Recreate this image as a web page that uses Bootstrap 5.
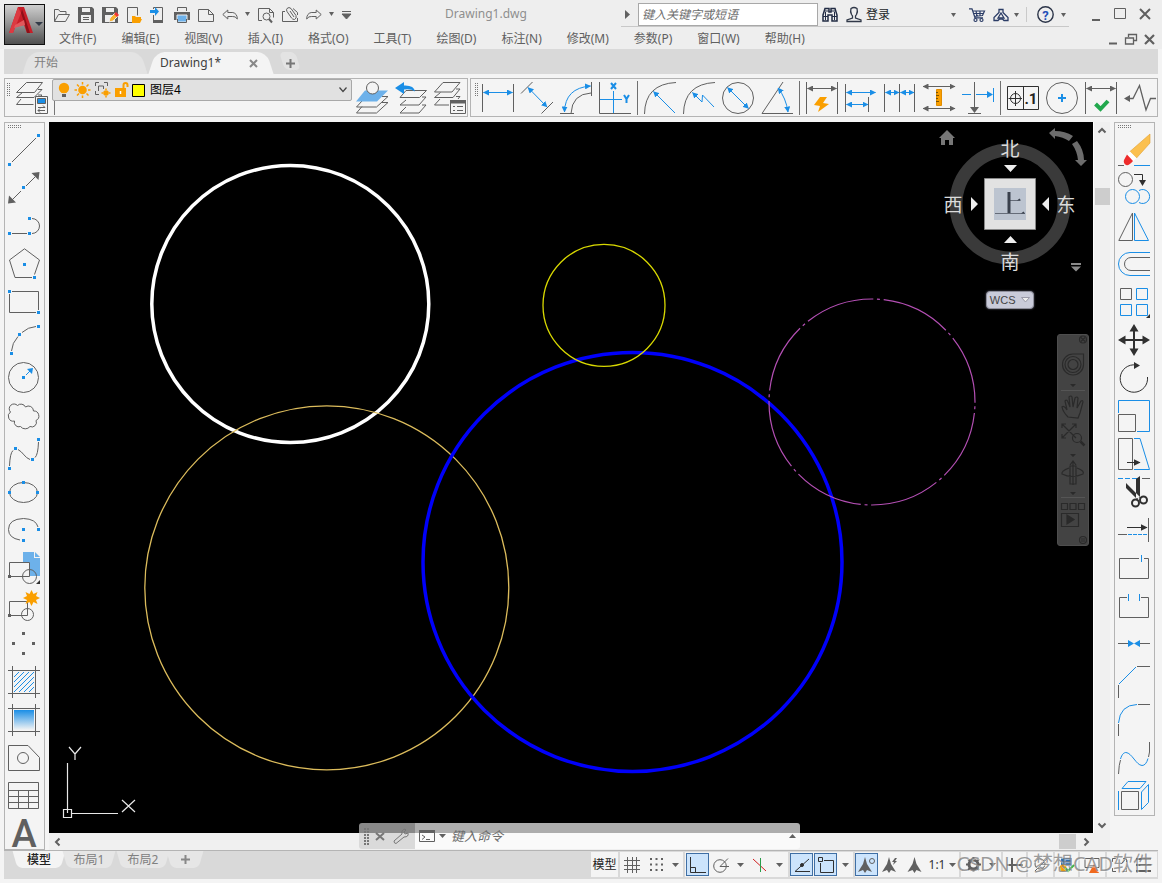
<!DOCTYPE html>
<html lang="zh-CN">
<head>
<meta charset="utf-8">
<meta name="viewport" content="width=device-width, initial-scale=1">
<title>Drawing1.dwg</title>
<link href="https://cdn.jsdelivr.net/npm/bootstrap@5.3.0/dist/css/bootstrap.min.css" rel="stylesheet">
<style>
:root{--ink:#606060;--blue:#1a8ee6;--edge:#b4b4b4;--panel:#f4f4f4;--bar:#d9d9d9}
body{font-family:"Noto Sans","Noto Sans CJK SC",sans-serif;font-size:12px;line-height:16px;color:#606060;background:var(--panel)}
button{font:inherit;color:inherit;background:none;border:0;padding:0;line-height:1}
svg{display:block;flex:none;fill:none;overflow:visible}
svg:where(:not([stroke])){stroke:var(--ink)}
.b{stroke:var(--blue)}.k{stroke:#303030}.r{stroke:#d02020}
.fb{fill:var(--blue);stroke:none}.fg{fill:var(--ink);stroke:none}.fk{fill:#303030;stroke:none}
.fo{fill:#fa9f00;stroke:none}.fw{fill:#f4f4f4}
.app-head{background:#eee}
.logo-btn{width:41px;height:41px;margin:4px 0 4px 4px;border:1px solid #111;background:linear-gradient(#cfcfcf,#8c8c8c 55%,#4e4e4e)}
.title-row{height:27px;padding:0 11px 0 9px}
.qat{gap:8px;padding-top:2px}
.tight{margin-left:-4px}
.title-text{font-size:12px;color:#8e8e8e}
.help-row{height:27px;padding:3px 2px 0 0;border-bottom:1px solid #c8c8c8}
.help-row .vr{margin-right:10px}
.search-box{width:180px;height:23px;border:1px solid #a8a8a8;background:#fff;font-size:12px;font-style:italic;padding:0 3px;border-radius:0}
.search-box::placeholder,.cmd-box::placeholder{color:#6c6c6c;opacity:1}
.win-btns{gap:13px;margin-left:23px}
.menu-row{height:22px;padding:2px 7px 0 14px}
.menu-row nav{gap:25px}
.doc-btns{gap:7px}
.menu-row a,.menu-row a:hover{color:#606060;text-decoration:none}
.doc-tabs{height:25px;background:var(--bar);margin:0 4px;padding:3px 0 0 18px}
.doc-tab{position:relative;height:22px;width:126px;padding-left:12px;z-index:0}
.doc-tab::before,.doc-tab::after{content:"";position:absolute;top:0;bottom:0;width:60%;z-index:-1;background:#e3e3e3}
.doc-tab::before{left:4px;transform:skewX(-18deg);border-radius:9px 0 0 0}
.doc-tab::after{right:4px;transform:skewX(18deg);border-radius:0 9px 0 0}
.doc-tab.current::before,.doc-tab.current::after,.sheet.current::before,.sheet.current::after{background:var(--panel)}
.doc-tab.plus-tab{width:24px;padding:0}
.doc-tab.plus-tab::before,.doc-tab.plus-tab::after{transform:skewX(18deg);border-radius:5px;bottom:4px}
.doc-tab a,.sheet,.sheet:hover{color:#808080;text-decoration:none}
.doc-tab.current a{color:#404040}
.bars{padding:4px 4px 0;gap:2px}
.bar-frame{height:39px;border:1px solid var(--edge);background:var(--panel)}
.grip-h{height:8px;padding:2px 0 0 3px}
.layer-bar{width:464px;padding:0 2px}
.layer-pick{width:300px;height:22px;border:1px solid #a8a8a8;border-radius:2px;background:#e1e1e1;padding:0 4px;gap:3px}
.layer-pick select{appearance:none;border:0;background:none;color:#000;font-size:12px;padding:0;margin-left:2px;line-height:16px;height:18px}
.layer-wrap{width:300px;height:36px;margin-left:4px}
.layer-wrap~button+button{margin-left:7px}
.layer-stub{width:1px;height:14px;background:#777;margin-left:2px}
.dim-bar{padding:0 0 0 4px}
.dim-set{gap:6px;margin-left:2px}
.dim-set button{width:33px;height:32px}
.dim-sep{width:1px;height:34px;background:#707070;margin-left:-1px}
.work{padding:5px 7px 0 4px;gap:4px}
.tool-col{width:41px;border:1px solid var(--edge);background:var(--panel)}
.tool-col button{height:38px;width:39px;flex:none;display:flex;align-items:center;justify-content:center}
.tool-col button svg{margin-left:-1px}
.tool-col .text-tool{height:34px}
.sheet-area{background:#000}
.vbar{width:17px;background:#f0f0f0;border-left:1px solid #fff;padding:6px 0 5px}
.hbar{height:17px;background:#f0f0f0;padding:0 21px 0 6px}
.vthumb{width:15px;height:17px;background:#cdcdcd;margin-top:55px}
.hthumb{width:17px;height:15px;background:#cdcdcd}
.compass{position:absolute;top:0;right:0}
.compass text{font-family:"Noto Sans CJK SC",sans-serif;font-size:19px;fill:#dcdcdc;stroke:none;text-anchor:middle}
.wcs{position:absolute;top:169px;right:59px;width:48px;height:18px;border:1px solid #8f909c;border-radius:4px;background:#c9cbd9;color:#444;font-size:11px;font-family:"Liberation Sans",sans-serif;box-shadow:0 0 2px #667}
.nav-pad{position:absolute;top:212px;right:4px;width:32px;height:212px;border:1px solid #4e4e4e;border-radius:3px;background:#434343}
.nav-pad svg{stroke:#2a2a2a}
.ucs{position:absolute;left:12px;bottom:11px;stroke:#e8e8e8}
.cmd{position:absolute;bottom:1px;left:310px;width:441px;height:26px;border-radius:3px;overflow:hidden}
.cmd-side{width:56px;background:rgba(207,207,207,.66);padding-left:6px}
.cmd-inner{background:rgba(255,255,255,.68);padding:0 4px}
.cmd-box{border:0;background:none;font-size:13px;font-style:italic;padding:0;margin-left:5px;outline:0;line-height:18px}
.status{height:29px;background:var(--bar);border-top:1px solid var(--edge);margin:0 4px 4px}
.sheets{padding-left:10px}
.sheet{position:relative;z-index:0;width:50px;height:17px;font-size:12px;line-height:17px;text-align:center}
.sheet::before,.sheet::after{content:"";position:absolute;top:0;bottom:0;width:60%;z-index:-1;background:#e6e6e6}
.sheet::before{left:1px;transform:skewX(16deg);border-radius:0 0 0 5px}
.sheet::after{right:1px;transform:skewX(-16deg);border-radius:0 0 5px 0}
.sheet.current{color:#222;font-weight:500}
.sheet.plus{width:34px}
.stat{padding:1px 1px 0 0;gap:2px}
.stat-set{height:25px;background:var(--panel)}
.stat-set button{width:24px;height:23px;display:flex;align-items:center;justify-content:center}
.stat-set button.drop{width:15px}
.stat-set button.on{border:1px solid #3f6fa5;background:#cce4fc;width:23px}
.stat-set .word{width:27px;color:#222}
.stat-set .scale-pick{width:33px;gap:4px;color:#333}
.snap-set{gap:1px}
.polar-set{padding:0 1px}
.s22{width:23px}.s25{width:25px}.s40{width:40px}.s50{width:50px}
.stamp{position:absolute;right:5px;bottom:3px;font-size:20px;line-height:24px;color:rgba(125,125,125,.75);text-shadow:1px 1px 0 rgba(255,255,255,.5);white-space:nowrap}
</style>
</head>
<body class="vh-100 overflow-hidden d-flex flex-column">
<svg width="0" height="0" class="position-absolute" aria-hidden="true"><defs>
<marker id="ab" viewBox="0 0 6 6" refX="5.500" refY="3" markerWidth="6" markerHeight="6" markerUnits="userSpaceOnUse" orient="auto-start-reverse"><path d="M0 0L6 3L0 6z" fill="#1a8ee6" stroke="none"/></marker>
<marker id="ag" viewBox="0 0 6 6" refX="5.500" refY="3" markerWidth="6" markerHeight="6" markerUnits="userSpaceOnUse" orient="auto-start-reverse"><path d="M0 0L6 3L0 6z" fill="#606060" stroke="none"/></marker>
<marker id="ak" viewBox="0 0 6 6" refX="5.500" refY="3" markerWidth="7" markerHeight="7" markerUnits="userSpaceOnUse" orient="auto-start-reverse"><path d="M0 0L6 3L0 6z" fill="#303030" stroke="none"/></marker>
<linearGradient id="fade" x2="0" y2="1"><stop stop-color="#1a8ee6"/><stop offset="1" stop-color="#f4f4f4"/></linearGradient>
</defs></svg>

<header class="app-head d-flex">
  <button class="logo-btn d-flex align-items-center" aria-label="应用程序菜单">
    <svg width="39" height="39" stroke="none"><path d="M4 28L13 2h6l9 26h-6l-3-8-9 2-2 6z" fill="#c81e28"/><path d="M13 2l-9 26h4L16 8z" fill="#dc3a42"/><path d="M16 8l4 12 2 8h3L17 4z" fill="#8e1018"/><path d="M10 20l9-5 1 5-11 3z" fill="#e2585c"/><path d="M30 17h8l-4 4z" fill="#333b48"/></svg>
  </button>
  <div class="flex-grow-1 d-flex flex-column">
    <div class="title-row d-flex align-items-center">
      <div class="qat d-flex align-items-center">
        <button aria-label="打开"><svg width="16" height="16"><path d="M.5 14.500v-12h4l1.500 2h6v3M.5 14.500l4-7h11l-4 7z"/></svg></button>
        <button aria-label="保存"><svg width="16" height="16"><path d="M0 0h14l2 2v14H0z" class="fg"/><path d="M4 1h8v4H4zM3 8h10v7H3z" fill="#eee" stroke="none"/><path d="M5 10.500h6M5 12.500h6"/></svg></button>
        <button aria-label="另存为"><svg width="16" height="16"><path d="M0 0h14l2 2v14H0z" class="fg"/><path d="M4 1h8v4H4zM3 8h10v7H3z" fill="#eee" stroke="none"/><path d="M7 15l1-4 5-5 3 3-5 5z" fill="#f9b233" stroke="#eee"/><path d="M12 7l2-2 3 3-2 2z" fill="#e33" stroke="none"/></svg></button>
        <button aria-label="从云打开"><svg width="16" height="16"><path d="M7 15.500H1.500V.5h10v8"/><path d="M6 9h3l1 1h5v2h1l-2 4H6z" class="fo"/></svg></button>
        <button aria-label="保存到云"><svg width="16" height="16"><path d="M3.500 2V.5h9v15h-9V8"/><path d="M0 3h5V0l4 4.500L5 9V6H0z" class="fb"/><path d="M3 13h10v3H3z" class="fg"/></svg></button>
        <button aria-label="打印"><svg width="16" height="16"><path d="M3.500 4V.5h9V4"/><path d="M0 5h16v8H0z" class="fg"/><path d="M3 8h10v7H3z" fill="#6db1ea" stroke="#eee"/><path d="M3.500 12v3.500h9V12"/></svg></button>
        <button aria-label="新建"><svg width="16" height="16"><path d="M.5 2.500h10l5 5v7H.5zM10.500 2.500v5h5"/></svg></button>
        <button aria-label="放弃"><svg width="16" height="16"><path d="M.8 7.500l5-4.500v2.500h5q4.500 1 4.500 6.500-2-3-5-2.500H5.800V12z"/></svg></button>
        <button class="tight" aria-label="放弃列表"><svg width="8" height="5"><path d="M3 0h5L5.500 4z" class="fg"/></svg></button>
        <button aria-label="打印预览"><svg width="16" height="16"><path d="M4 13.500H.5v-12h11l4 4v5M11.500 1.500v4h4"/><circle cx="8.500" cy="9.500" r="3.500"/><path d="M11 12l3 3.500" stroke-width="2"/></svg></button>
        <button aria-label="附着"><svg width="16" height="16"><path d="M3 4.500H.5v10h15V11M11 1.500l4.500 4V8"/><path d="M5 1.500q2-2 4 0l5 7q1 3-1.500 4-2 0-3-1.500L5 4.500q-1-2 0-3zM8 4l4 6"/></svg></button>
        <button aria-label="重做"><svg width="16" height="16"><path d="M15.200 7.500l-5-4.500v2.500h-5Q.700 6.500.7 12q2-3 5-2.500h4.500V12z"/></svg></button>
        <button class="tight" aria-label="重做列表"><svg width="8" height="5"><path d="M3 0h5L5.500 4z" class="fg"/></svg></button>
        <button aria-label="自定义快速访问工具栏"><svg width="9" height="8"><path d="M0 .5h9M0 3h9L4.500 8z" fill="#606060"/></svg></button>
      </div>
      <div class="title-text flex-grow-1 text-center">Drawing1.dwg</div>
      <div class="help-row d-flex align-items-center">
        <svg class="ms-1 me-2" width="5" height="9"><path d="M0 0l5 4.500L0 9z" class="fg"/></svg>
        <input class="search-box" placeholder="键入关键字或短语" aria-label="搜索">
        <button class="ms-1" aria-label="查找"><svg width="16" height="15" stroke="#222c44"><path d="M1 8l2-6.500h4V5h2V1.500h4L15 8v6H10V8H6v6H1z" fill="#eee" stroke-width="1.500"/><path d="M1 9.500h5m4 0h5M3 4h4m2 0h4M3.500 5v8M12.500 5v8"/></svg></button>
        <button class="ms-2 d-flex align-items-center"><svg class="me-1" width="16" height="15" stroke="#303848"><path d="M5 1.500q3-2 6 0 1 3-.5 6L9.500 9v2l5.500 2v1.500H1V13l5.500-2V9L5.500 7.500Q4 4.500 5 1.500z" stroke-width="1.300"/></svg><span class="text-dark">登录</span></button>
        <button class="ps-5 ms-2 pe-1" aria-label="登录选项"><svg width="11" height="4"><path d="M5 0h5L7.500 4z" class="fg"/></svg></button>
        <button class="ms-2" aria-label="应用商店"><svg width="16" height="14" stroke="#2b3c66" stroke-width="1.200"><path d="M0 .8h3l3 9h8M4 3h11.500l-2 4.500-8.500 1M7 3l1 5m3-5v4.500M4 5.500h11"/><circle cx="6.500" cy="12" r="1.500"/><circle cx="12.500" cy="12" r="1.500"/></svg></button>
        <button class="ms-2" aria-label="联系"><svg width="16" height="14" stroke="#2b3c66" stroke-width="1.300"><path d="M6 1.500h4v3l5 5v3h-4l-1.500-1.500h-3L5 12.500H1v-3l5-5z"/><path d="M8 5l3 5H5z"/></svg></button>
        <button class="ms-1" aria-label="更多"><svg width="9" height="4"><path d="M1 0h5L3.500 4z" class="fg"/></svg></button>
        <div class="vr ms-1 my-1"></div>
        <button aria-label="帮助"><svg width="17" height="17" stroke="#2b3448"><circle cx="8.500" cy="8.500" r="7.700" stroke-width="1.400"/><text x="8.500" y="13.500" text-anchor="middle" font-family="Roboto" font-weight="700" font-size="13" fill="#2350b8" stroke="none">?</text></svg></button>
        <button class="ms-1" aria-label="帮助选项"><svg width="9" height="4"><path d="M3 0h5L5.500 4z" class="fg"/></svg></button>
      </div>
      <div class="win-btns d-flex align-items-center">
        <button aria-label="最小化"><svg width="9" height="12"><path d="M0 12h8" stroke-width="2"/></svg></button>
        <button aria-label="最大化"><svg width="12" height="11"><path d="M.5.5h11v10H.5z"/></svg></button>
        <button aria-label="关闭"><svg width="12" height="12"><path d="M1 1l10 10M11 1L1 11" stroke-width="2"/></svg></button>
      </div>
    </div>
    <div class="menu-row d-flex align-items-center">
      <nav class="d-flex flex-grow-1" aria-label="主菜单">
        <a href="#">文件(F)</a><a href="#">编辑(E)</a><a href="#">视图(V)</a><a href="#">插入(I)</a><a href="#">格式(O)</a><a href="#">工具(T)</a><a href="#">绘图(D)</a><a href="#">标注(N)</a><a href="#">修改(M)</a><a href="#">参数(P)</a><a href="#">窗口(W)</a><a href="#">帮助(H)</a>
      </nav>
      <div class="doc-btns d-flex">
        <button aria-label="最小化图形"><svg width="9" height="12"><path d="M0 10.500h8" stroke-width="2"/></svg></button>
        <button aria-label="还原图形"><svg width="12" height="11"><path d="M3.500 3V.5h8v6H9M.5 4h8v6h-8z" stroke-width="1.300"/></svg></button>
        <button aria-label="关闭图形"><svg width="11" height="11"><path d="M1 1l9 9M10 1L1 10" stroke-width="2.200"/></svg></button>
      </div>
    </div>
  </div>
</header>

<div class="doc-tabs d-flex">
  <div class="doc-tab d-flex align-items-center"><a href="#">开始</a></div>
  <div class="doc-tab current d-flex align-items-center"><a class="flex-grow-1" href="#">Drawing1*</a><button class="me-3" aria-label="关闭选项卡"><svg width="9" height="9"><path d="M1 1l7 7M8 1L1 8" stroke="#888" stroke-width="2"/></svg></button></div>
  <div class="doc-tab plus-tab d-flex align-items-center justify-content-center ms-1"><button aria-label="新图形"><svg width="9" height="9"><path d="M4.500 0v9M0 4.500h9" stroke="#777" stroke-width="2"/></svg></button></div>
</div>

<div class="bars d-flex">
  <div class="bar-frame layer-bar d-flex" role="toolbar" aria-label="图层">
    <svg width="5" height="18"><path d="M.5 4v13M2.500 4v13" stroke="#777" stroke-dasharray="1 1"/></svg>
    <button class="ms-1" aria-label="图层特性"><svg width="32" height="32"><path d="M10.500.5h16l-8 10h-18zM22 7.500h4l-8 8H.5l6-5M22 13h4l-2 2M5 17l-4.500 5.500h17"/><path d="M19.500 14.500h12v17h-12z" class="fw"/><path d="M21.500 16.500h8v5h-8z" fill="#1a8ee6"/><path d="M22 25.500h7M29 28.500h-7M27 23.500l2 2M24 26.500l-2 2 2 2"/></svg></button>
    <div class="layer-wrap">
      <div class="layer-pick d-flex align-items-center">
        <svg width="15" height="16"><circle cx="7" cy="6" r="5.200" class="fo"/><path d="M4.500 9h5v2h-5z" class="fo"/><path d="M5 12h4v3H5z" class="fg"/></svg>
        <svg width="16" height="16"><circle cx="7.500" cy="8" r="4.300" class="fo"/><path d="M7.500 0v2.500m0 11V16M-.5 8h2.500m11 0h2.500M2 2.500l2 2m7.500 7l2 2M2 13.500l2-2m7.500-7l2-2" stroke="#fa9f00" stroke-width="1.500"/></svg>
        <svg width="18" height="16"><path d="M1.500 4V.5H5M10 .5h3.500V4M1.500 9v3.500H5M4.500 9v-5h5v3"/><circle cx="12" cy="11" r="2.800" class="fo"/><path d="M12 6.500v1.500m0 6v1.500M7.500 11H9m6 0h1.500" stroke="#fa9f00" stroke-width="1.500"/></svg>
        <svg width="14" height="16"><path d="M0 6h11v9H0z" class="fo"/><path d="M8.500 6V3q0-2 2-2t2 2v2" stroke="#fa9f00" stroke-width="2"/><path d="M5.500 9v3" stroke="#fff" stroke-width="1.500"/></svg>
        <svg width="13" height="13"><path d="M.5.5h12v12H.5z" fill="#ff0" stroke="#000"/></svg>
        <select class="flex-grow-1" aria-label="当前图层"><option>图层4</option></select>
        <svg width="8" height="6"><path d="M.5.5L4 4.500 7.500.5" stroke="#444" stroke-width="1.200"/></svg>
      </div>
      <div class="layer-stub"></div>
    </div>
    <button class="ms-1" aria-label="置为当前"><svg width="32" height="32"><path d="M6 24.500L.5 31h20L32 20.500h-6M6 19L.5 25h20L32 14.500h-6"/><path d="M9 8.500h23l-11 11H0z" fill="#6db1ea" stroke="none"/><circle cx="16.500" cy="6" r="6" fill="#f4f4f4"/></svg></button>
    <button aria-label="上一个图层"><svg width="32" height="32"><path d="M11 8.500h20.500l-7 7H5zM27 15h4l-7 8H5l6-5M27 23h4l-7 8H5l6-6"/><path d="M0 6l9-6v3.500q10-.5 11 6-4-3-11-2V12z" class="fb"/></svg></button>
    <button aria-label="图层状态"><svg width="32" height="32"><path d="M9 .5h17l-8 9.500H.5zM22 7h4l-7 8.500H.5l6-5M22 14.500h4L24 17M6 17l-5.500 6H15"/><path d="M16.500 18.500h15v13h-15z" class="fw"/><path d="M16 18h16v3.500H16z" class="fg"/><path d="M19 24.500h2m2 0h6M19 28.500h2m2 0h6"/></svg></button>
  </div>
  <div class="bar-frame dim-bar flex-grow-1 d-flex" role="toolbar" aria-label="标注">
    <svg width="5" height="18"><path d="M.5 4v13M2.500 4v13" stroke="#777" stroke-dasharray="1 1"/></svg>
    <div class="dim-set d-flex align-items-center">
      <button aria-label="线性"><svg width="32" height="32"><path d="M.5 2v28M31.500 2v28"/><path class="b" d="M1.500 10.500h29" marker-start="url(#ab)" marker-end="url(#ab)"/></svg></button>
      <button aria-label="对齐"><svg width="32" height="32"><path d="M0 11.500L11.500 0M20.500 31.500L32 20"/><path class="b" d="M7 5.500L26 25" marker-start="url(#ab)" marker-end="url(#ab)"/></svg></button>
      <button aria-label="弧长"><svg width="32" height="32"><path d="M0 31.500h14M11 31.500Q12 12 31 11M31.500 0v14"/><path class="b" d="M4.500 30Q5 6 30.500 4" marker-start="url(#ab)" marker-end="url(#ab)"/></svg></button>
      <button aria-label="坐标"><svg width="32" height="32"><path d="M.5 0v31.500H32"/><path class="b" d="M14.500 9v22M1 17.500h22"/><path class="b" d="M12 1l5 6M17 1l-5 6M25 13l2.500 4 2.500-4M27.500 17v4" stroke-width="2"/></svg></button>
      <div class="dim-sep"></div>
      <button aria-label="半径"><svg width="32" height="32"><path d="M.5 32Q1 2 32 .5"/><path class="b" d="M9.500 9.500L31 31" marker-start="url(#ab)"/></svg></button>
      <button aria-label="折弯"><svg width="32" height="32"><path d="M.5 32Q1 2 32 .5"/><path class="b" d="M9.500 10.500L19 20l.5-7L31 25" marker-start="url(#ab)"/></svg></button>
      <button aria-label="直径"><svg width="32" height="32"><circle cx="16" cy="16" r="15.500"/><path class="b" d="M5.500 5.500L26.500 26.500" marker-start="url(#ab)" marker-end="url(#ab)"/></svg></button>
      <button aria-label="角度"><svg width="32" height="32"><path d="M22 0L1 31.500h31"/><path class="b" d="M17 6Q25 16 27 30" marker-start="url(#ab)" marker-end="url(#ab)"/></svg></button>
      <div class="dim-sep"></div>
      <button aria-label="快速标注"><svg width="32" height="32"><path d="M.5 0v32M31.500 0v32"/><path d="M1.500 6.500h29" marker-start="url(#ag)" marker-end="url(#ag)"/><path class="fo" d="M14 15l-6 8 6 1-2 6 11-8-6-1 4-6z"/></svg></button>
      <button aria-label="基线"><svg width="32" height="32"><path d="M.5 2v28M23.500 15v15"/><path class="b" d="M1.500 10.500h29" marker-start="url(#ab)" marker-end="url(#ab)"/><path class="b" d="M1.500 22.500H23" marker-start="url(#ab)" marker-end="url(#ab)"/></svg></button>
      <button aria-label="连续"><svg width="32" height="32"><path d="M.5 2v28M15.500 2v28M30.500 2v28"/><path class="b" d="M1.500 10.500H15" marker-start="url(#ab)" marker-end="url(#ab)"/><path class="b" d="M16.500 10.500H30" marker-start="url(#ab)" marker-end="url(#ab)"/></svg></button>
      <button aria-label="等距标注"><svg width="32" height="32"><path d="M0 4.500h32" marker-start="url(#ag)" marker-end="url(#ag)"/><path d="M0 26.500h32" marker-start="url(#ag)" marker-end="url(#ag)"/><path d="M13.500 7.500h5v16h-5z" fill="#fa9f00" stroke="#e08c00"/><path d="M13 10.500h2m-2 3h3m-3 3h2m-2 3h3" stroke="#7a5200"/></svg></button>
      <button aria-label="折断标注"><svg width="32" height="32"><path d="M12.500 0v26M6 31.500h13"/><path class="fg" d="M8 25h9l-4.500 6z"/><path class="b" d="M0 12.500h9M14 12.500h16M31.500 6v14"/><path class="fb" d="M25 9v7l6-3.500z"/></svg></button>
      <div class="dim-sep"></div>
      <button aria-label="公差"><svg width="32" height="32" class="k"><path d="M.5 4.500h31v23H.5zM16.500 4.500v23M8.500 9v15M1.500 16.500H15"/><circle cx="8.500" cy="16.500" r="5"/><text x="24" y="22" text-anchor="middle" font-family="Roboto" font-weight="700" font-size="15" fill="#222" stroke="none">.1</text></svg></button>
      <button aria-label="圆心标记"><svg width="32" height="32"><circle cx="16" cy="16" r="15.500"/><path class="b" d="M16 12v8M12 16h8" stroke-width="2"/></svg></button>
      <button aria-label="检验"><svg width="32" height="32"><path d="M.5 0v32M31.500 0v32"/><path d="M1.500 6.500h29" marker-start="url(#ag)" marker-end="url(#ag)"/><path d="M10.500 22l5 5 7.500-8" stroke="#21a84d" stroke-width="4"/></svg></button>
      <button aria-label="折弯线性"><svg width="32" height="32"><path d="M2 16.500h7L15.500 3.500 22 28l4.500-11.500H32" stroke-width="1.300"/><path class="fg" d="M0 16.500l6-3.500v7z"/></svg></button>
    </div>
  </div>
</div>

<main class="work flex-grow-1 d-flex">
  <div class="tool-col d-flex flex-column flex-shrink-0" role="toolbar" aria-label="绘图">
    <div class="grip-h flex-shrink-0"><svg width="14" height="4"><path d="M0 .5h14M0 2.500h14" stroke="#777" stroke-dasharray="1 1"/></svg></div>
    <button aria-label="直线"><svg width="32" height="32"><path d="M4 28L28 4"/><path class="fb" d="M0 29h3v3H0zM29 0h3v3h-3z"/></svg></button>
    <button aria-label="构造线"><svg width="32" height="32"><path d="M4 28l9-9M18 14l9-9"/><path class="fg" d="M31.500 0l-1 8-7-7zM0 31.500l1-8 7 7z"/><path class="fb" d="M14 14h3v3h-3z"/></svg></button>
    <button aria-label="多段线"><svg width="32" height="32"><path d="M4 23.500h15M24 8.500a7.500 7.500 0 0 1 0 15"/><path class="fb" d="M0 22h3v3H0zM20 22h3v3h-3zM20 7h3v3h-3z"/></svg></button>
    <button aria-label="多边形"><svg width="32" height="32"><path d="M26.500 26.500L31.500 12 16.500.8 1.500 12 7 29.500h17"/><path class="fb" d="M15 15h3v3h-3zM25 28h3v3h-3z"/></svg></button>
    <button aria-label="矩形"><svg width="32" height="32"><path d="M4 5.500h26.500V24M28 26.500H1.500V8"/><path class="fb" d="M0 4h3v3H0zM29 25h3v3h-3z"/></svg></button>
    <button aria-label="圆弧"><svg width="32" height="32"><path d="M3.500 27Q4 19 10 12.500M14 8.500Q20 3 28 2.500"/><path class="fb" d="M2 28h3v3H2zM10 9h3v3h-3zM29 1h3v3h-3z"/></svg></button>
    <button aria-label="圆"><svg width="32" height="32"><circle cx="15.500" cy="15.500" r="15"/><path class="fb" d="M14 14h3v3h-3zM25 6l-1 6-5-5z"/><path class="b" d="M18 13l5-5"/></svg></button>
    <button aria-label="修订云线"><svg width="32" height="32"><path d="M2.500 12a4.500 4.500 0 1 1 7-6.500 5 5 0 0 1 8 1.500 5 5 0 0 1 8 4 5 5 0 0 1 2.500 9.500 4.500 4.500 0 0 1-6 6 6 6 0 0 1-9.500 0A4.500 4.500 0 0 1 6.500 21 5 5 0 0 1 2.500 12z"/></svg></button>
    <button aria-label="样条曲线"><svg width="32" height="32"><path d="M1.500 28Q2 15 5 12.500M10 11.500C15 14 17 20 22 21.500M27 19.500Q30 17 30.500 4"/><path class="fb" d="M0 29h3v3H0zM6 9h3v3H6zM23 20h3v3h-3zM29 0h3v3h-3z"/></svg></button>
    <button aria-label="椭圆"><svg width="32" height="32"><ellipse cx="15.500" cy="16.500" rx="14" ry="10"/><path class="fb" d="M14 5h3v3h-3zM0 15h3v3H0zM28 15h3v3h-3z"/></svg></button>
    <button aria-label="椭圆弧"><svg width="32" height="32"><path d="M12 26Q.5 24 .5 15.500.5 5 15.500 4.500 28 5 30 13"/><path class="fb" d="M14 14h3v3h-3zM29 14h3v3h-3zM14 25h3v3h-3z"/></svg></button>
    <button aria-label="插入块"><svg width="32" height="32"><path d="M15 0h11v6h6v18H15z" fill="#6db1ea" stroke="none"/><path d="M27 0l5 5h-5z" fill="#6db1ea" stroke="none"/><path class="fw" d="M1.500 10.500h20v14h-20z"/><circle cx="21.500" cy="24.500" r="7"/><path class="fg" d="M0 23h3v3H0z"/><path class="fk" d="M32 28v4h-4z"/></svg></button>
    <button aria-label="创建块"><svg width="32" height="32"><path d="M1.500 11.500h18v14h-18z"/><circle cx="19.500" cy="24.500" r="6"/><path class="fg" d="M0 24h3v3H0z"/><path class="fo" d="M23.500 0l2 4 4-2-1.500 4 4 2-4 2 1.500 4-4-2-2 4-2-4-4 2 1.500-4-4-2 4-2-1.500-4 4 2z"/></svg></button>
    <button aria-label="点"><svg width="32" height="32"><path class="fg" d="M14 4h3v3h-3zM4 14h3v3H4zM24 14h3v3h-3zM14 24h3v3h-3z"/></svg></button>
    <button aria-label="图案填充"><svg width="32" height="32"><path d="M4.500 0v32M27.500 0v32M0 4.500h32M0 27.500h32"/><path class="b" d="M6 11l5-5M6 16L16 6M6 21L21 6M6 26L26 6M11 26l15-15M16 26l10-10M21 26l5-5"/></svg></button>
    <button aria-label="渐变色"><svg width="32" height="32"><path d="M4.500 0v32M27.500 0v32M0 4.500h32M0 27.500h32"/><path d="M6 6h20v20H6z" fill="url(#fade)" stroke="none"/></svg></button>
    <button aria-label="面域"><svg width="32" height="32"><path d="M.5 3.500H20l11.500 12v13H.5z"/><circle cx="15" cy="16" r="5.500"/></svg></button>
    <button aria-label="表格"><svg width="32" height="32"><path d="M.5 2.500h30v26H.5zM.5 10.500h30M.5 16.500h30M.5 22.500h30M10.500 10.500v18M20.500 10.500v18"/></svg></button>
    <button class="text-tool" aria-label="多行文字"><svg width="32" height="32"><text x="16" y="31" text-anchor="middle" font-family="Roboto" font-weight="500" font-size="38" class="fg">A</text></svg></button>
  </div>

  <div class="flex-grow-1 d-flex flex-column position-relative">
    <div class="flex-grow-1 d-flex">
      <div class="sheet-area flex-grow-1 position-relative overflow-hidden">
        <svg class="position-absolute top-0 start-0 w-100 h-100" role="img" aria-label="图形">
          <circle cx="241.300" cy="182" r="138.500" stroke="#fff" stroke-width="3.500"/>
          <circle cx="277.800" cy="465.800" r="182" stroke="#dcbc5c" stroke-width="1.300"/>
          <circle cx="583.500" cy="440" r="209.500" stroke="#0000fa" stroke-width="3.500"/>
          <circle cx="555" cy="183.300" r="61" stroke="#d8d800" stroke-width="1.300"/>
          <circle cx="823" cy="280" r="103" stroke="#b44fb4" stroke-width="1.200" stroke-dasharray="70.400 3.700 3 3.800" stroke-dashoffset="69.700"/>
        </svg>
        <svg class="compass" width="160" height="160" stroke="none">
          <circle cx="77" cy="82" r="54" stroke="#3a3a3a" stroke-width="13"/>
          <path d="M51.500 56.500h51v51h-51z" fill="#e2e2e2" stroke="#888"/><path d="M61 66h32v32H61z" fill="#bcc4d0"/>
          <path d="M77 78.500h10M62 91.500h30" stroke="#656c78"/><path d="M74.500 70h3v21h-3zM84 78.500l2.500-2 1.500 2zM88 91.500l2.500-2 1.500 2z" fill="#39404c"/>
          <path d="M71 43h13l-6.500 7zM71 121h13l-6.500-7zM38 75v14l7-7zM116 75v14l-7-7z" fill="#eee"/>
          <text x="77" y="34">北</text><text x="20" y="90">西</text><text x="133" y="90">东</text><text x="77" y="147">南</text>
          <path d="M6 16l8-8 8 8h-2v7h-4v-5h-4v5H8v-7z" fill="#777"/>
          <path d="M116 11l6-5v3q10 0 18 5l-4 5q-6-4-14-5v3z" fill="#6c6c6c"/><path d="M148 44l-6-6h3q-1-9-6-16l5-3q7 9 7 19h3z" fill="#6c6c6c"/>
          <path d="M138 141h10v2h-10zM138 144.500h10l-5 5z" fill="#8a8a8a"/>
        </svg>
        <button class="wcs d-flex align-items-center justify-content-around">WCS<svg width="9" height="6"><path d="M.5.5h8L4.500 5z" fill="#eee" stroke="#9a9aa8"/></svg></button>
        <div class="nav-pad" role="toolbar" aria-label="导航栏">
          <svg width="30" height="210" stroke-width="1.200">
            <circle cx="25" cy="4.500" r="3.500"/><path d="M23 2.500l4 4m0-4l-4 4"/>
            <path d="M15 19h10.500v10.500A10.500 10.500 0 1 1 15 19z"/><circle cx="15" cy="29.500" r="5"/><circle cx="15" cy="29.500" r="8"/>
            <path d="M12 49h6l-3 3zM12 119h6l-3 3zM12 157h6l-3 3z" fill="#2a2a2a" stroke="none"/>
            <path d="M3 55.500h24M3 162.500h24" stroke="#555"/>
            <path d="M10 82q-5-5-6-10 2-2 5 3l-2-9q2-2 3 1l2 5-1-10q2-2 3 0l1 10 2-9q2-2 3 0l-1 10 4-7q2-1 2 1l-3 11-2 5z"/>
            <path d="M4 89l14 14M18 89L4 103M4 93v-4h4M14 89h4v4M4 99v4h4"/><circle cx="19" cy="103" r="4.500"/><path d="M22.500 106.500l4 4" stroke-width="2.500"/>
            <path d="M15 126v24M12 130l3-4 3 4M12 131h6v18h-6zM11 133q-8 3-7 6 10 5 21 0 2-3-6-6"/>
            <path d="M3.500 168.500h6v6h-6zM12 168.500h6v6h-6zM20.500 168.500h6v6h-6zM3.500 178.500h17v13h-17z"/><path d="M9 180v9l7-4.500z" fill="#2a2a2a"/>
            <circle cx="25" cy="205" r="3.500"/><path d="M23 204h4M23 206h4"/>
          </svg>
        </div>
        <svg class="ucs" width="76" height="76" stroke-width="1.200"><path d="M6.500 17v50M11 67.500h46M2.500 63.500h8v8h-8zM8 1l6 7v6M20 1l-6 7M61 54l13 12M74 54L61 66"/></svg>
      </div>
      <div class="vbar d-flex flex-column align-items-center">
        <button aria-label="向上"><svg width="8" height="5"><path d="M.5 4.500L4 1l3.500 3.500" stroke-width="2"/></svg></button>
        <div class="vthumb"></div>
        <button class="mt-auto" aria-label="向下"><svg width="8" height="5"><path d="M.5.5L4 4 7.500.5" stroke-width="2"/></svg></button>
      </div>
    </div>
    <div class="hbar d-flex align-items-center">
      <button aria-label="向左"><svg width="5" height="8"><path d="M4.500.5L1 4l3.500 3.500" stroke-width="2"/></svg></button>
      <div class="hthumb ms-auto me-1"></div>
      <button class="ps-1" aria-label="向右"><svg width="5" height="8"><path d="M.5.5L4 4 .5 7.500" stroke-width="2"/></svg></button>
    </div>
    <div class="cmd d-flex">
      <div class="cmd-side d-flex align-items-center gap-2 flex-shrink-0">
        <svg width="3" height="17"><path d="M0 0v17M3 0v17" stroke="#777" stroke-width="2" stroke-dasharray="2 1"/></svg>
        <button aria-label="关闭命令行"><svg width="9" height="9"><path d="M0 1l8 7M8 1L0 8" stroke="#777" stroke-width="2"/></svg></button>
        <button aria-label="自定义"><svg width="15" height="16"><path d="M1 13l8-7q-1-4 3-5l1 1-2 2 1 2 3-1q1 4-4 4L3 15.500q-2 0-2-2.500z" stroke="#777"/></svg></button>
      </div>
      <div class="cmd-inner flex-grow-1 d-flex align-items-center">
        <button aria-label="最近使用的命令" class="d-flex align-items-center gap-1"><svg width="16" height="12"><path d="M.5.5h15v11H.5zM3 5l3 2-3 2.500M7 9.500h4"/><path class="fg" d="M0 0h16v3H0z"/></svg><svg width="7" height="4"><path d="M0 0h7L3.500 4z" class="fg"/></svg></button>
        <input class="cmd-box flex-grow-1" placeholder="键入命令" aria-label="命令">
        <svg width="7" height="4"><path d="M0 4h7L3.500 0z" class="fg"/></svg>
      </div>
    </div>
  </div>

  <div class="tool-col d-flex flex-column align-self-start flex-shrink-0" role="toolbar" aria-label="修改">
    <div class="grip-h flex-shrink-0"><svg width="14" height="4"><path d="M0 .5h14M0 2.500h14" stroke="#777" stroke-dasharray="1 1"/></svg></div>
    <button aria-label="删除"><svg width="32" height="32"><path d="M0 31.500h6"/><path class="b" d="M16 31.500h16"/><path d="M32 0v9L18.500 24 12 17.500z" fill="#fbc04f" stroke="#e0a030" stroke-width=".6"/><path d="M12 17.500l6.500 6.500-3.500 3.500L8.500 21z" fill="#fff" stroke="none"/><path d="M9 20.500l6 6.500q-4 5-7 4-3-2-2-5z" fill="#ee2c2c" stroke="none"/></svg></button>
    <button aria-label="复制"><svg width="32" height="32"><circle cx="7.500" cy="7.500" r="7"/><circle class="b" cx="14.500" cy="24.500" r="7"/><path class="b" d="M21 18.500a7 7 0 1 1 0 12"/><path class="k" d="M16 2.500h8.500V9"/><path class="fk" d="M21 8h7l-3.500 6z"/></svg></button>
    <button aria-label="镜像"><svg width="32" height="32"><path d="M14.500 3v27.500H.8z"/><path class="b" d="M16.500 3v27.500h14z"/></svg></button>
    <button aria-label="偏移"><svg width="32" height="32"><path class="b" d="M32 4.500H12a11.500 11.500 0 0 0 0 23h20"/><path d="M32 9.500H13a6.500 6.500 0 0 0 0 13h19"/></svg></button>
    <button aria-label="阵列"><svg width="32" height="32"><path d="M2.500 2.500h11v11h-11z"/><path class="b" d="M18.500 2.500h11v11h-11zM2.500 18.500h11v11h-11zM18.500 18.500h11v11h-11z"/><path class="fk" d="M32 28v4h-4z"/></svg></button>
    <button aria-label="移动"><svg width="32" height="32"><path class="fk" d="M16 0l4.500 7.500H17V15h7.500v-3.500L32 16l-7.500 4.500V17H17v7.500h3.500L16 32l-4.500-7.500H15V17H7.500v3.500L0 16l7.500-4.500V15H15V7.500h-3.500z"/></svg></button>
    <button aria-label="旋转"><svg width="32" height="32"><path class="k" d="M18 3A13.700 13.700 0 1 0 29.500 15"/><path class="fk" d="M16 0l6 3.500L16 7z"/></svg></button>
    <button aria-label="缩放"><svg width="32" height="32"><path class="b" d="M.5 13V.5h31v31H19"/><path d="M.5 14.500h17v17H.5z"/></svg></button>
    <button aria-label="拉伸"><svg width="32" height="32"><path d="M.5.5h14v31H.5z"/><path class="b" d="M16 .5h6l9.500 31H16"/><path class="k" d="M9 24.500h13" marker-end="url(#ak)"/></svg></button>
    <button aria-label="修剪"><svg width="32" height="32"><path class="b" d="M0 2.500h20" stroke-dasharray="5 2"/><path d="M24 2.500h8"/><path d="M8 7v5l11 11 3-2zM18 3l4-3v22h-4z" class="fk"/><g class="k" stroke-width="2"><circle cx="17.500" cy="27" r="3.500"/><circle cx="25.500" cy="24" r="3.500"/></g></svg></button>
    <button aria-label="延伸"><svg width="32" height="32"><path d="M0 20.500h9M30.500 4v24"/><path class="b" d="M10 20.500h20" stroke-dasharray="4 1"/><path class="k" d="M9 13.500h20" marker-end="url(#ak)"/></svg></button>
    <button aria-label="打断于点"><svg width="32" height="32"><path d="M21 6.500H1.500v20h29v-20H26"/><path class="b" d="M23.500 3v7"/></svg></button>
    <button aria-label="打断"><svg width="32" height="32"><path d="M9 7.500H1.500v20h29v-20H23"/><path class="b" d="M10.500 4v7M21.500 4v7"/></svg></button>
    <button aria-label="合并"><svg width="32" height="32"><path d="M0 15.500h10M22 15.500h10"/><path class="fb" d="M10 12l6 3.500-6 3.500zM22 12l-6 3.500 6 3.500z"/></svg></button>
    <button aria-label="倒角"><svg width="32" height="32"><path d="M19 .5h13M.5 19v13"/><path class="b" d="M18 1L1 18"/></svg></button>
    <button aria-label="圆角"><svg width="32" height="32"><path d="M20 .5h12M.5 20v12"/><path class="b" d="M19 .5Q2 1 .5 19"/></svg></button>
    <button aria-label="光顺曲线"><svg width="32" height="32"><path d="M.5 32Q1 22 2.500 18M31.500 0v10l-1 5"/><path class="b" d="M2.500 17C4 12 6 10.500 8 10.500 14 11 18 23 24 23.500q4 0 6-7"/></svg></button>
    <button aria-label="分解"><svg width="32" height="32"><path d="M3.500 11.500h17v18h-17z"/><path class="b" d="M.5 11v19M4 8.500l6-7h18l-6 7zM23.500 12l7-7.500v18l-7 7z"/></svg></button>
  </div>
</main>

<footer class="status d-flex position-relative">
  <nav class="sheets d-flex flex-grow-1" aria-label="布局">
    <a class="sheet current" href="#">模型</a><a class="sheet" href="#">布局1</a><a class="sheet ms-1" href="#">布局2</a><a class="sheet plus" href="#" aria-label="新建布局"><svg class="mx-auto mt-1" width="9" height="9"><path d="M4.500 0v9M0 4.500h9" stroke="#888" stroke-width="2"/></svg></a>
  </nav>
  <div class="stat d-flex">
    <div class="stat-set d-flex align-items-center"><button class="word">模型</button></div>
    <div class="stat-set d-flex align-items-center">
      <button aria-label="栅格"><svg width="16" height="16"><path d="M3.500 0v16M8.500 0v16M12.500 0v16M0 3.500h16M0 8.500h16M0 12.500h16"/></svg></button>
      <button aria-label="捕捉"><svg width="13" height="13"><path d="M0 1h13M0 6.500h13M0 12h13" stroke-width="2" stroke-dasharray="2 3.500"/></svg></button>
      <button class="drop" aria-label="捕捉选项"><svg width="7" height="4"><path d="M0 0h7L3.500 4z" class="fg"/></svg></button>
    </div>
    <div class="stat-set polar-set d-flex align-items-center">
      <button class="on" aria-label="正交"><svg width="16" height="16" class="k"><path d="M.5 0v15.500H16M.5 10.500h5v5"/></svg></button>
      <button aria-label="极轴追踪"><svg width="16" height="16"><circle cx="7" cy="9" r="6.300"/><path d="M7 9.500h9M7 9.500l8-8"/></svg></button>
      <button class="drop" aria-label="极轴选项"><svg width="7" height="4"><path d="M0 0h7L3.500 4z" class="fg"/></svg></button>
      <button aria-label="等轴测"><svg width="14" height="14"><path class="r" d="M0 1l13 12"/><path d="M7.500 0v14" stroke="#2a9d4a"/></svg></button>
      <button class="drop" aria-label="等轴测选项"><svg width="7" height="4"><path d="M0 0h7L3.500 4z" class="fg"/></svg></button>
    </div>
    <div class="stat-set snap-set d-flex align-items-center">
      <button class="on" aria-label="对象追踪"><svg width="16" height="14" class="k"><path d="M15 1L1 13.500h15"/><circle cx="8" cy="7" r="1.500" fill="#303030"/></svg></button>
      <button class="on" aria-label="对象捕捉"><svg width="16" height="16" class="k"><path d="M6 3.500h9.500v12h-13V6M.5.5h4v4h-4z"/></svg></button>
      <button class="drop" aria-label="捕捉设置"><svg width="7" height="4"><path d="M0 0h7L3.500 4z" class="fg"/></svg></button>
    </div>
    <div class="stat-set d-flex align-items-center">
      <button class="on" aria-label="注释可见性"><svg width="17" height="16"><path class="fg" d="M7 0l2 7 5 8-5-2-2 3-2-3-5 2 5-8z"/><circle cx="14" cy="4" r="2.500"/></svg></button>
      <button aria-label="自动缩放"><svg width="17" height="16"><path class="fg" d="M7 0l2 7 5 8-5-2-2 3-2-3-5 2 5-8zM13 1l-3 4h2l-1 3 4-4h-2l2-3z"/></svg></button>
      <button aria-label="注释"><svg width="15" height="16"><path class="fg" d="M7.500 0l2 7 5 8-5-2-2 3-2-3-5 2 5-8z"/></svg></button>
      <button class="scale-pick">1:1<svg width="7" height="4"><path d="M0 0h7L3.500 4z" class="fg"/></svg></button>
    </div>
    <div class="stat-set s40 d-flex align-items-center"><button aria-label="工作空间"><svg width="15" height="15"><circle cx="7.500" cy="7.500" r="4.500" stroke-width="3"/><path d="M7.500 0v3m0 9v3M0 7.500h3m9 0h3M2 2l2 2m7 7l2 2M2 13l2-2m7-7l2-2" stroke-width="2"/></svg></button><button class="drop" aria-label="工作空间选项"><svg width="7" height="4"><path d="M0 0h7L3.500 4z" class="fg"/></svg></button></div>
    <div class="stat-set s22 d-flex align-items-center"><button aria-label="注释监视器"><svg width="16" height="14"><path d="M5 0v14M0 7h16" stroke-width="2"/></svg></button></div>
    <div class="stat-set s25 d-flex align-items-center"><button aria-label="隔离对象"><svg width="15" height="15"><circle cx="7" cy="7" r="5"/><path d="M2 14L14 2"/></svg></button></div>
    <div class="stat-set s22 d-flex align-items-center"><button aria-label="硬件加速"><svg width="16" height="16"><path d="M2 1h11v8H2z" fill="#2f6eb0" stroke="none"/><circle cx="4" cy="11" r="3.500" class="fo"/><path d="M6 11l3 3 6-6" stroke="#37b24d" stroke-width="2"/></svg></button></div>
    <div class="stat-set s25 d-flex align-items-center"><button aria-label="图形性能"><svg width="16" height="16"><path d="M1 1.500h14v9H1z"/><path d="M10 7l5 9H5z" fill="#f06a1e" stroke="none"/></svg></button></div>
    <div class="stat-set s50 d-flex align-items-center"><button aria-label="全屏显示"><svg width="15" height="14"><path d="M.5 4V.5H4M11 .5h3.500V4M.5 10v3.500H4M11 13.500h3.500V10M9 6l5-5"/></svg></button><button aria-label="自定义"><svg width="16" height="14"><path d="M1 1h15M1 7h15M1 13h15" stroke-width="2"/></svg></button></div>
  </div>
  <div class="stamp">CSDN @梦想CAD软件</div>
</footer>
<script src="https://cdn.jsdelivr.net/npm/bootstrap@5.3.0/dist/js/bootstrap.bundle.min.js"></script>
</body>
</html>
